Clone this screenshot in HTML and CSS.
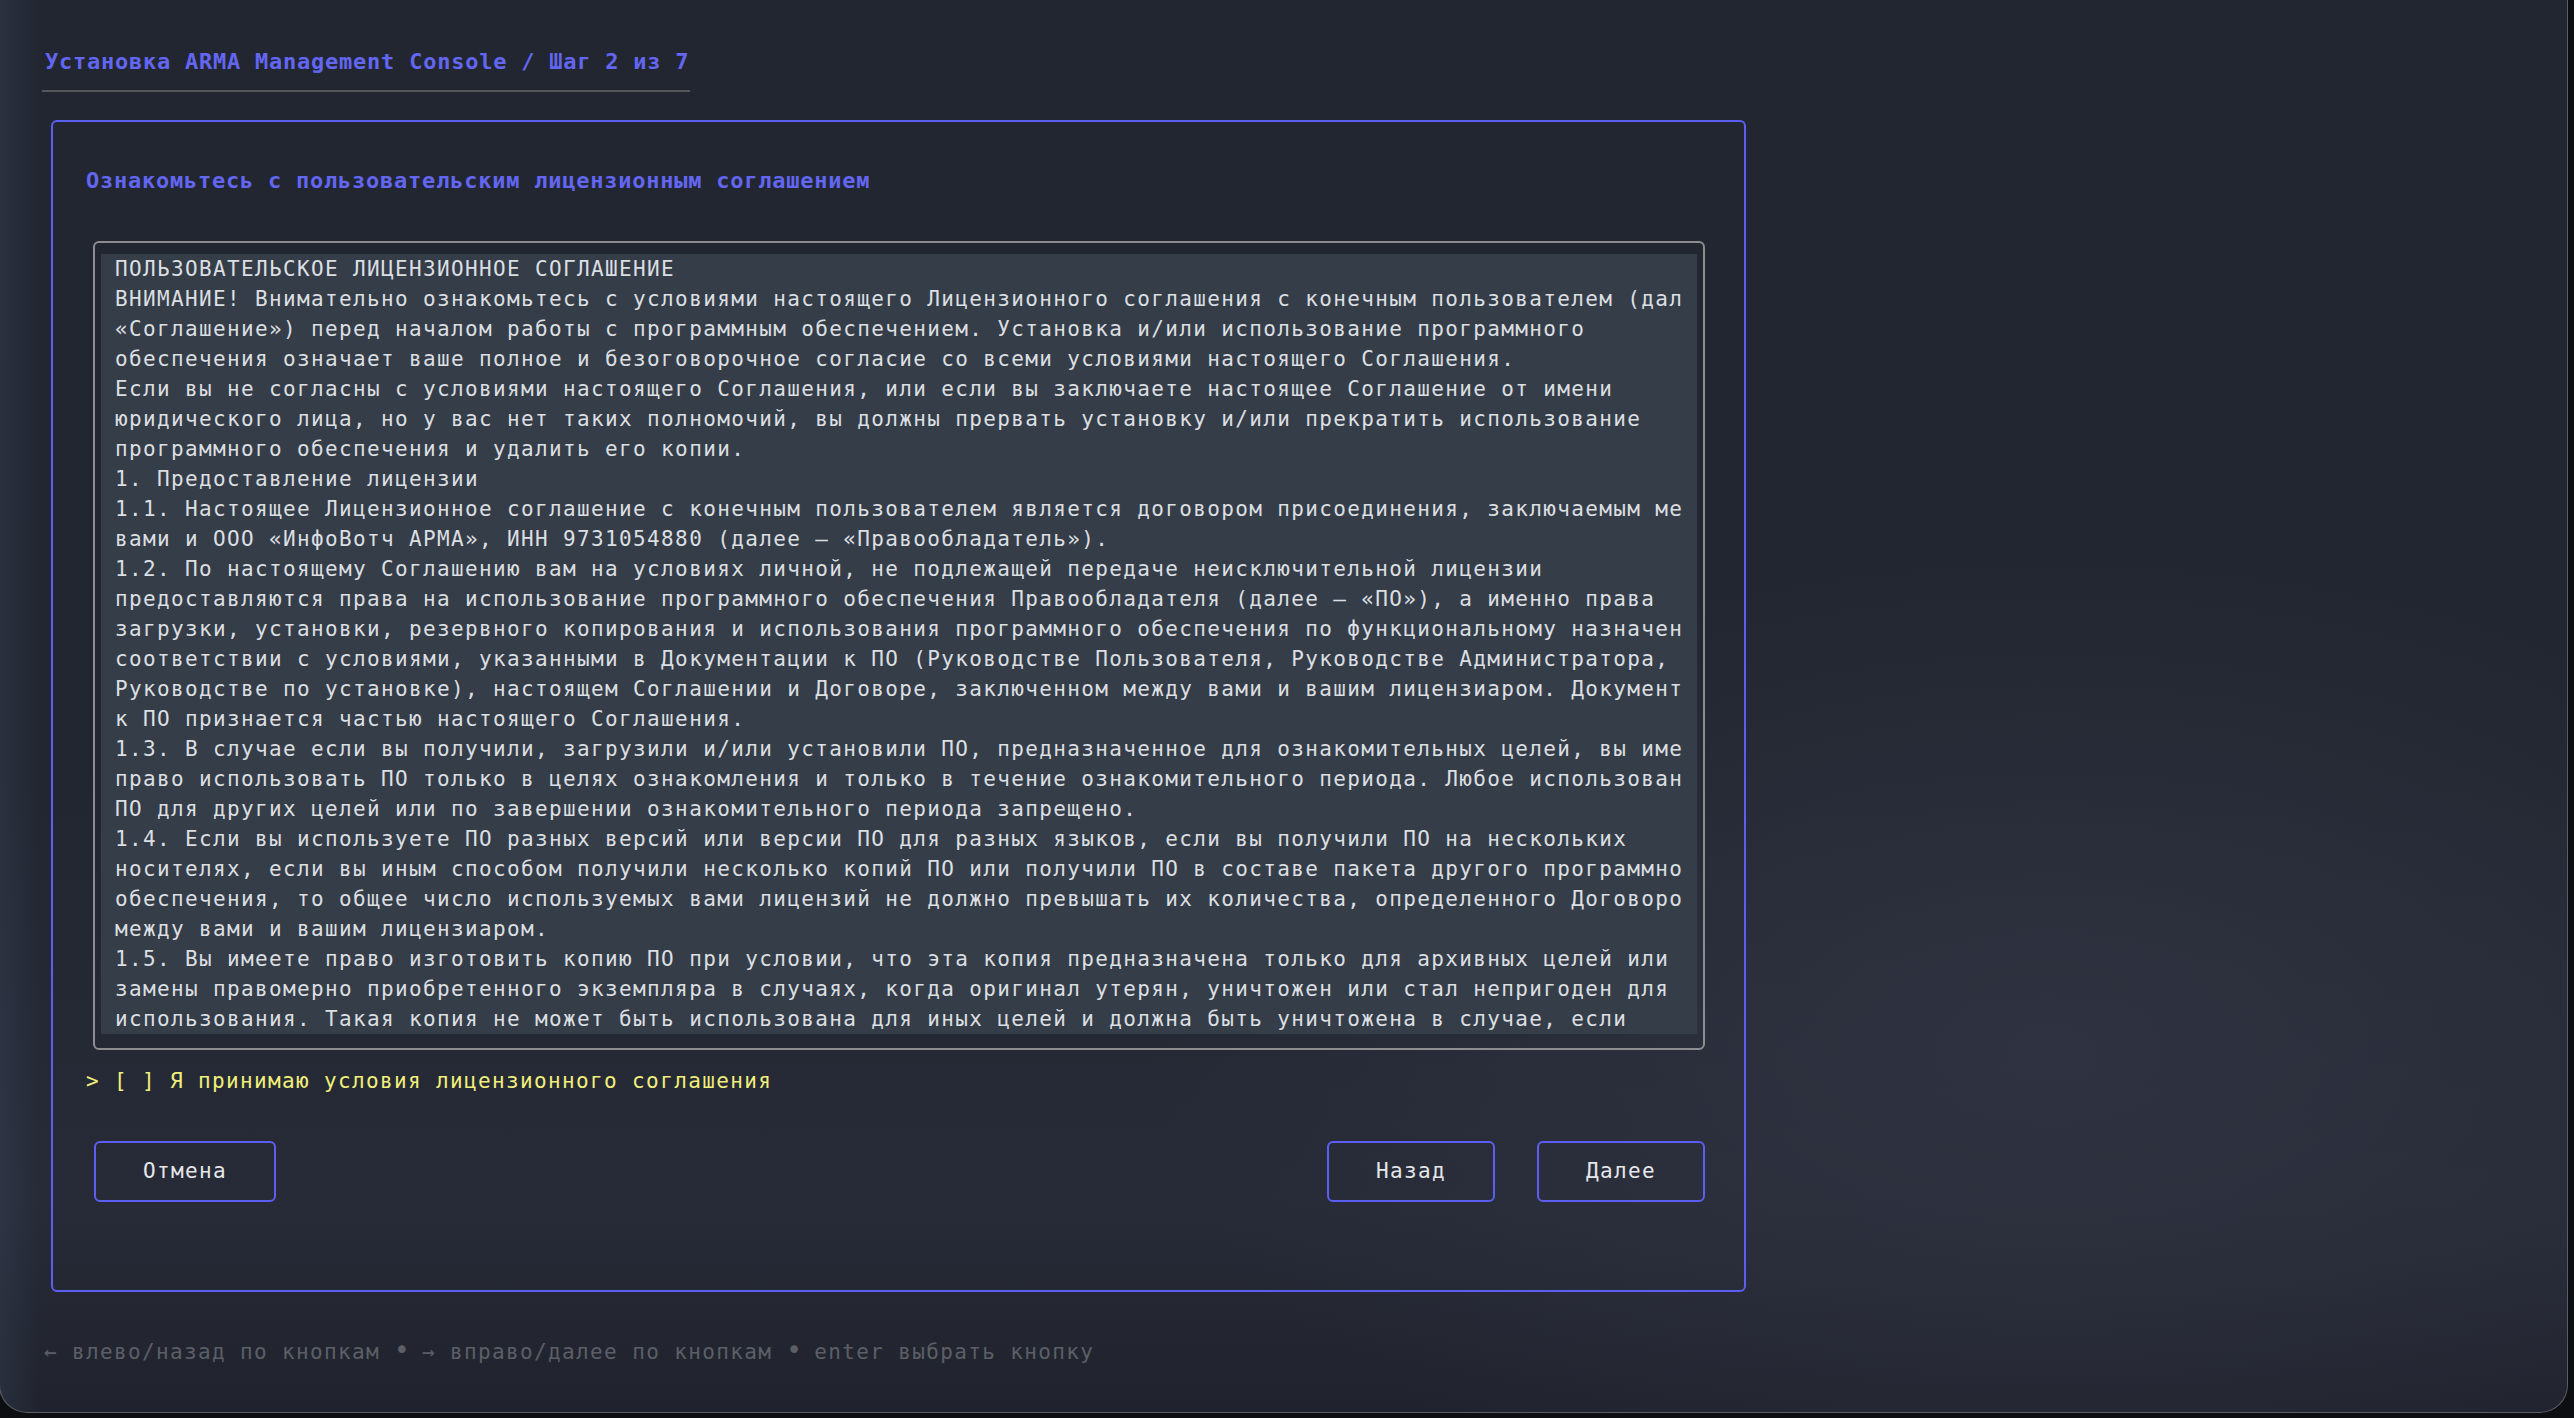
FILE: index.html
```html
<!DOCTYPE html>
<html lang="ru">
<head>
    <meta charset="UTF-8">
    <meta name="viewport" content="width=device-width, initial-scale=1.0">
    <title>Установка ARMA Management Console</title>
    <link rel="stylesheet" href="styles.css">
</head>
<body>
    <div class="window">
        <div class="step-title">Установка ARMA Management Console / Шаг 2 из 7</div>

        <div class="frame">
            <div class="frame-heading">Ознакомьтесь с пользовательским лицензионным соглашением</div>

            <div class="license">
                <div class="license-text">ПОЛЬЗОВАТЕЛЬСКОЕ ЛИЦЕНЗИОННОЕ СОГЛАШЕНИЕ
ВНИМАНИЕ! Внимательно ознакомьтесь с условиями настоящего Лицензионного соглашения с конечным пользователем (дал
«Соглашение») перед началом работы с программным обеспечением. Установка и/или использование программного
обеспечения означает ваше полное и безоговорочное согласие со всеми условиями настоящего Соглашения.
Если вы не согласны с условиями настоящего Соглашения, или если вы заключаете настоящее Соглашение от имени
юридического лица, но у вас нет таких полномочий, вы должны прервать установку и/или прекратить использование
программного обеспечения и удалить его копии.
1. Предоставление лицензии
1.1. Настоящее Лицензионное соглашение с конечным пользователем является договором присоединения, заключаемым ме
вами и ООО «ИнфоВотч АРМА», ИНН 9731054880 (далее — «Правообладатель»).
1.2. По настоящему Соглашению вам на условиях личной, не подлежащей передаче неисключительной лицензии
предоставляются права на использование программного обеспечения Правообладателя (далее — «ПО»), а именно права
загрузки, установки, резервного копирования и использования программного обеспечения по функциональному назначен
соответствии с условиями, указанными в Документации к ПО (Руководстве Пользователя, Руководстве Администратора,
Руководстве по установке), настоящем Соглашении и Договоре, заключенном между вами и вашим лицензиаром. Документ
к ПО признается частью настоящего Соглашения.
1.3. В случае если вы получили, загрузили и/или установили ПО, предназначенное для ознакомительных целей, вы име
право использовать ПО только в целях ознакомления и только в течение ознакомительного периода. Любое использован
ПО для других целей или по завершении ознакомительного периода запрещено.
1.4. Если вы используете ПО разных версий или версии ПО для разных языков, если вы получили ПО на нескольких
носителях, если вы иным способом получили несколько копий ПО или получили ПО в составе пакета другого программно
обеспечения, то общее число используемых вами лицензий не должно превышать их количества, определенного Договоро
между вами и вашим лицензиаром.
1.5. Вы имеете право изготовить копию ПО при условии, что эта копия предназначена только для архивных целей или
замены правомерно приобретенного экземпляра в случаях, когда оригинал утерян, уничтожен или стал непригоден для
использования. Такая копия не может быть использована для иных целей и должна быть уничтожена в случае, если</div>
            </div>

            <div class="accept">&gt; [ ] Я принимаю условия лицензионного соглашения</div>

            <div class="actions">
                <button class="btn">Отмена</button>
                <div class="spacer"></div>
                <button class="btn">Назад</button>
                <button class="btn">Далее</button>
            </div>
        </div>

        <div class="hint">← влево/назад по кнопкам <span class="dot">•</span> → вправо/далее по кнопкам <span class="dot">•</span> enter выбрать кнопку</div>
    </div>
</body>
</html>
```

FILE: styles.css
```css
body {
    margin: 0;
    background-color: #0d0e11;
    font-family: "DejaVu Sans Mono", "Liberation Mono", monospace;
    font-size: 21px;
    line-height: 30px;
    letter-spacing: 1.36px;
    color: #dfe1e4;
    overflow: hidden;
}

/* terminal window, bottom corners rounded, left edge sits just off screen */
.window {
    box-sizing: border-box;
    width: 2569px;
    height: 1413px;
    margin-left: -1px;
    padding-top: 47px;
    border: 1px solid #5a5d65;
    border-top: none;
    border-radius: 0 0 28px 28px;
    overflow: hidden;
    background:
        linear-gradient(90deg, rgba(70, 86, 115, 0.22) 0, rgba(70, 86, 115, 0) 40px),
        radial-gradient(ellipse 900px 500px at 2050px 1050px, rgba(48, 52, 66, 0.9), rgba(48, 52, 66, 0)),
        linear-gradient(180deg, #222631 0%, #222630 55%, #272b37 85%, #20232d 100%);
}

/* bold headings keep the 14px cell width */
.step-title,
.frame-heading {
    color: #6366f1;
    font-weight: bold;
    font-size: 22px;
    letter-spacing: 0.76px;
}

.step-title {
    box-sizing: border-box;
    width: 648px;
    margin-left: 42px;
    padding: 0 0 13px 3px;
    border-bottom: 2px solid #55575b;
}

.frame {
    box-sizing: border-box;
    width: 1695px;
    margin: 28px 0 0 51px;
    padding: 44px 39px 88px 33px;
    border: 2px solid #5b5ef0;
    border-radius: 6px;
}

.license {
    margin: 45px 0 0 7px;
    padding: 11px 6px 14px;
    border: 2px solid #8b8d91;
    border-radius: 6px;
}

.license-text {
    height: 780px;
    padding: 0 14px;
    background-color: #353e48;
    color: #dcdfe2;
    white-space: pre;
    overflow: hidden;
}

.accept {
    margin-top: 16px;
    color: #f1ef7c;
}

.actions {
    display: flex;
    gap: 42px;
    margin: 45px 0 0 8px;
}

.spacer {
    flex: 1;
}

.btn {
    box-sizing: border-box;
    height: 61px;
    padding: 0 47px;
    border: 2px solid #5b5ef0;
    border-radius: 6px;
    background: transparent;
    color: #e6e7ea;
    font: inherit;
    letter-spacing: inherit;
    line-height: 57px;
}

.hint {
    margin: 43px 0 0 44px;
    color: #5c5f66;
}

.hint .dot {
    display: inline-block;
    width: 14px;
    font-size: 26px;
    letter-spacing: 0;
    text-align: center;
}
```
